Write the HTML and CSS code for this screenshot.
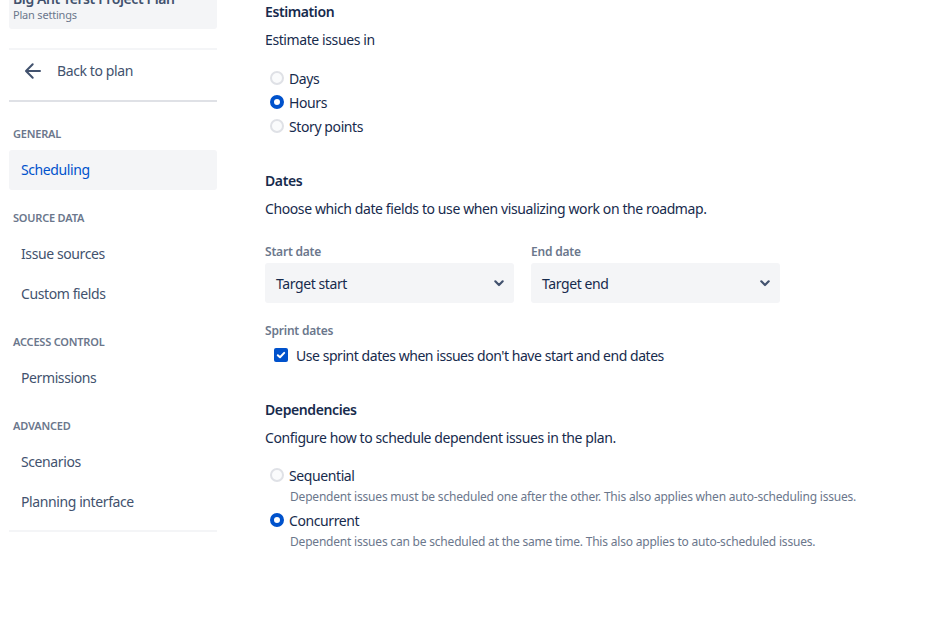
FILE: index.html
```html
<!DOCTYPE html>
<html>
<head>
<meta charset="utf-8">
<link rel="stylesheet" href="styles.css">
</head>
<body>
<div class="page">
  <aside class="sidebar">
    <div class="plan-card">
      <div class="plan-title">Big Ant Terst Project Plan</div>
      <div class="plan-sub">Plan settings</div>
    </div>
    <div class="back-row">
      <svg class="back-icon" width="24" height="24" viewBox="0 0 24 24"><path d="M11.7 5.3 5 12l6.7 6.7M5.6 12H19" fill="none" stroke="#42526e" stroke-width="2" stroke-linecap="round" stroke-linejoin="round"/></svg>
      <span>Back to plan</span>
    </div>
    <nav class="nav">
      <div class="nav-group">
        <div class="nav-heading">GENERAL</div>
        <div class="nav-item active">Scheduling</div>
      </div>
      <div class="nav-group">
        <div class="nav-heading">SOURCE DATA</div>
        <div class="nav-item">Issue sources</div>
        <div class="nav-item">Custom fields</div>
      </div>
      <div class="nav-group">
        <div class="nav-heading">ACCESS CONTROL</div>
        <div class="nav-item">Permissions</div>
      </div>
      <div class="nav-group">
        <div class="nav-heading">ADVANCED</div>
        <div class="nav-item">Scenarios</div>
        <div class="nav-item">Planning interface</div>
      </div>
    </nav>
  </aside>
  <main class="main">
    <section class="section">
      <h2 class="sec-title">Estimation</h2>
      <p class="sec-desc">Estimate issues in</p>
      <div class="radios est">
        <div class="radio-row"><span class="radio"></span><span>Days</span></div>
        <div class="radio-row"><span class="radio checked"></span><span>Hours</span></div>
        <div class="radio-row"><span class="radio"></span><span>Story points</span></div>
      </div>
    </section>
    <section class="section">
      <h2 class="sec-title">Dates</h2>
      <p class="sec-desc">Choose which date fields to use when visualizing work on the roadmap.</p>
      <div class="selects">
        <div class="field">
          <div class="field-label">Start date</div>
          <div class="select"><span>Target start</span><svg width="24" height="24" viewBox="0 0 24 24"><path d="M8.3 10.3 12 14l3.7-3.7" fill="none" stroke="#42526e" stroke-width="2.2" stroke-linecap="round" stroke-linejoin="round"/></svg></div>
        </div>
        <div class="field">
          <div class="field-label">End date</div>
          <div class="select"><span>Target end</span><svg width="24" height="24" viewBox="0 0 24 24"><path d="M8.3 10.3 12 14l3.7-3.7" fill="none" stroke="#42526e" stroke-width="2.2" stroke-linecap="round" stroke-linejoin="round"/></svg></div>
        </div>
      </div>
      <div class="field sprint">
        <div class="field-label">Sprint dates</div>
        <div class="check-row">
          <span class="checkbox"><svg width="14" height="14" viewBox="0 0 14 14"><path d="M3.8 7.2 6 9.3l4.2-4.4" fill="none" stroke="#fff" stroke-width="2" stroke-linecap="round" stroke-linejoin="round"/></svg></span>
          <span>Use sprint dates when issues don't have start and end dates</span>
        </div>
      </div>
    </section>
    <section class="section">
      <h2 class="sec-title">Dependencies</h2>
      <p class="sec-desc">Configure how to schedule dependent issues in the plan.</p>
      <div class="radios dep">
        <div class="dep-opt">
          <div class="radio-row"><span class="radio"></span><span>Sequential</span></div>
          <div class="opt-desc">Dependent issues must be scheduled one after the other. This also applies when auto-scheduling issues.</div>
        </div>
        <div class="dep-opt">
          <div class="radio-row"><span class="radio checked"></span><span>Concurrent</span></div>
          <div class="opt-desc">Dependent issues can be scheduled at the same time. This also applies to auto-scheduled issues.</div>
        </div>
      </div>
    </section>
  </main>
</div>
</body>
</html>
```
FILE: styles.css
```css
* { box-sizing: border-box; }
html, body { margin: 0; padding: 0; background: #fff; }
body {
  font-family: "Noto Sans", "Open Sans", sans-serif;
  font-size: 14px;
  letter-spacing: -0.4px;
  color: #172b4d;
  overflow: hidden;
  height: 633px;
}
.page { display: flex; align-items: flex-start; }
.sidebar {
  width: 208px;
  margin-left: 9px;
  margin-top: -14px;
  flex-shrink: 0;
}
.plan-card {
  background: #f4f5f7;
  border-radius: 3px;
  padding: 4px 4px 6px 4px;
  height: 43px;
}
.plan-title { font-weight: 600; font-size: 14px; line-height: 18px; color: #42526e; }
.plan-sub { font-size: 11px; line-height: 14px; color: #6b778c; letter-spacing: -0.2px; }
.back-row {
  margin-top: 19px;
  border-top: 2px solid #f4f5f7;
  border-bottom: 2px solid #dfe1e6;
  height: 54px;
  display: flex;
  align-items: flex-start;
  gap: 12px;
  padding-left: 12px;
  padding-top: 9px;
  color: #42526e;
  font-size: 14px;
  line-height: 24px;
}
.back-icon { flex-shrink: 0; }
.nav { border-bottom: 2px solid #f4f5f7; padding-bottom: 8px; }
.nav-group { padding-top: 20px; }
.nav-group:first-child { padding-top: 24px; }
.nav-heading {
  font-size: 11px;
  font-weight: 600;
  letter-spacing: -0.2px;
  color: #6b778c;
  padding-left: 4px;
  line-height: 16px;
  margin-bottom: 8px;
}
.nav-item {
  height: 40px;
  line-height: 40px;
  padding-left: 12px;
  color: #42526e;
  border-radius: 3px;
}
.nav-item.active { background: #f4f5f7; color: #0052cc; }
.main { padding-left: 48px; padding-top: 2px; }
.section { margin-bottom: 33px; }
.sec-title { margin: 0; font-size: 14px; font-weight: 600; line-height: 20px; color: #172b4d; }
.sec-desc { margin: 8px 0 0; line-height: 20px; }
.radios { margin-top: 15px; }
.radios.est { margin-top: 16px; }
.radio-row { display: flex; align-items: center; height: 24px; gap: 4px; padding-left: 4px; }
.radio {
  width: 14px; height: 14px; border-radius: 50%;
  border: 2px solid #dfe1e6; background: #fafbfc;
  flex-shrink: 0;
  margin: 0 1px;
}
.radio.checked { border: 4px solid #0052cc; background: #fff; }
.selects { display: flex; gap: 17px; margin-top: 25px; }
.field { width: 249px; }
.field-label { font-size: 12px; font-weight: 600; letter-spacing: -0.2px; color: #6b778c; line-height: 16px; margin-bottom: 3px; }
.select {
  height: 40px; background: #f4f5f7; border-radius: 3px;
  display: flex; align-items: center; justify-content: space-between;
  padding: 0 3px 0 11px;
}
.select svg { flex-shrink: 0; }
.sprint { width: auto; margin-top: 20px; }
.check-row { display: flex; align-items: center; gap: 8px; padding-left: 9px; height: 24px; margin-top: 4px; }
.check-row span:last-child { letter-spacing: -0.45px; }
.checkbox {
  width: 14px; height: 14px; background: #0052cc; border-radius: 2px;
  display: flex; align-items: center; justify-content: center;
}
.dep .dep-opt + .dep-opt { margin-top: 3px; }
.opt-desc { font-size: 12px; letter-spacing: -0.2px; color: #6b778c; padding-left: 25px; line-height: 16px; margin-top: 2px; }
```
